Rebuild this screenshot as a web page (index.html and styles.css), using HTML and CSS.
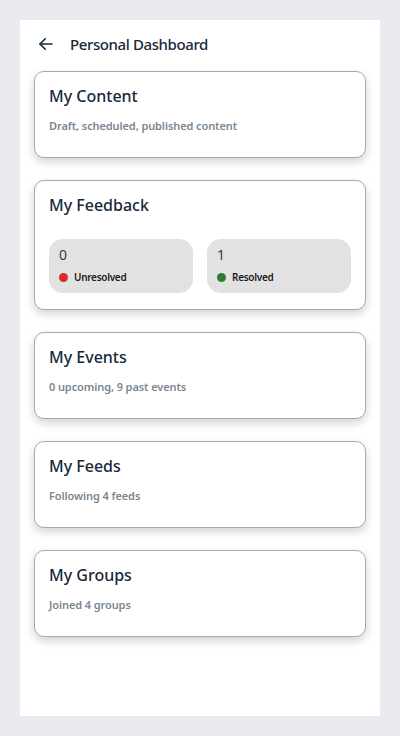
FILE: index.html
```html
<!DOCTYPE html>
<html>
<head>
<meta charset="utf-8">
<link rel="stylesheet" href="styles.css">
</head>
<body>
<div class="screen">
  <header class="topbar">
    <svg class="back" width="18" height="18" viewBox="0 0 24 24" fill="none" stroke="#16293b" stroke-width="2.2" stroke-linecap="round" stroke-linejoin="round"><path d="M20 12H4"/><path d="M11 5l-7 7 7 7"/></svg>
    <h1 class="title">Personal Dashboard</h1>
  </header>
  <main class="list">
    <section class="card">
      <h2 class="card-title">My Content</h2>
      <p class="card-sub">Draft, scheduled, published content</p>
    </section>
    <section class="card card-feedback">
      <h2 class="card-title">My Feedback</h2>
      <div class="stats">
        <div class="stat">
          <div class="stat-num">0</div>
          <div class="stat-label"><span class="dot red"></span>Unresolved</div>
        </div>
        <div class="stat">
          <div class="stat-num">1</div>
          <div class="stat-label"><span class="dot green"></span>Resolved</div>
        </div>
      </div>
    </section>
    <section class="card">
      <h2 class="card-title">My Events</h2>
      <p class="card-sub">0 upcoming, 9 past events</p>
    </section>
    <section class="card">
      <h2 class="card-title">My Feeds</h2>
      <p class="card-sub">Following 4 feeds</p>
    </section>
    <section class="card">
      <h2 class="card-title">My Groups</h2>
      <p class="card-sub">Joined 4 groups</p>
    </section>
  </main>
</div>
</body>
</html>
```

FILE: styles.css
```css
* { box-sizing: border-box; }
html, body { margin: 0; padding: 0; }
body {
  background: #e9eaef;
  font-family: "Noto Sans", "Open Sans", sans-serif;
  padding: 20px;
  height: 736px;
}
.screen {
  background: #ffffff;
  height: 696px;
  padding: 0 14px;
}
.topbar {
  display: flex;
  align-items: center;
  height: 50px;
  padding: 0 0 2px 3px;
  gap: 15px;
}
.back { display: block; }
.title {
  margin: 0;
  font-size: 15px;
  letter-spacing: -0.4px;
  font-weight: 500;
  color: #16293b;
}
.list {
  display: flex;
  flex-direction: column;
  gap: 22px;
  padding-top: 1px;
}
.card {
  border: 1px solid #a9a9a9;
  border-radius: 10px;
  background: #fff;
  box-shadow: 0 4px 10px rgba(0,0,0,0.18);
  height: 87px;
  padding: 12px 14px 0;
}
.card-feedback { height: 130px; }
.card-title {
  margin: 0;
  font-size: 16px;
  line-height: 24px;
  font-weight: 500;
  color: #16293b;
}
.card-sub {
  margin: 10px 0 0;
  font-size: 11px;
  line-height: 16px;
  letter-spacing: -0.1px;
  font-weight: 600;
  color: #7b8693;
}
.stats {
  display: grid;
  grid-template-columns: 1fr 1fr;
  gap: 14px;
  margin-top: 22px;
}
.stat {
  background: #e2e2e2;
  border-radius: 14px;
  height: 54px;
  padding: 6px 10px 0;
}
.stat-num {
  font-size: 14px;
  line-height: 20px;
  color: #3a3a3a;
}
.stat-label {
  display: flex;
  align-items: center;
  gap: 6px;
  margin-top: 5px;
  font-size: 10px;
  letter-spacing: -0.3px;
  font-weight: 600;
  color: #1b1b1b;
}
.dot {
  width: 9px;
  height: 9px;
  border-radius: 50%;
  display: inline-block;
}
.red { background: #d92b2b; }
.green { background: #2e7d32; }
```
